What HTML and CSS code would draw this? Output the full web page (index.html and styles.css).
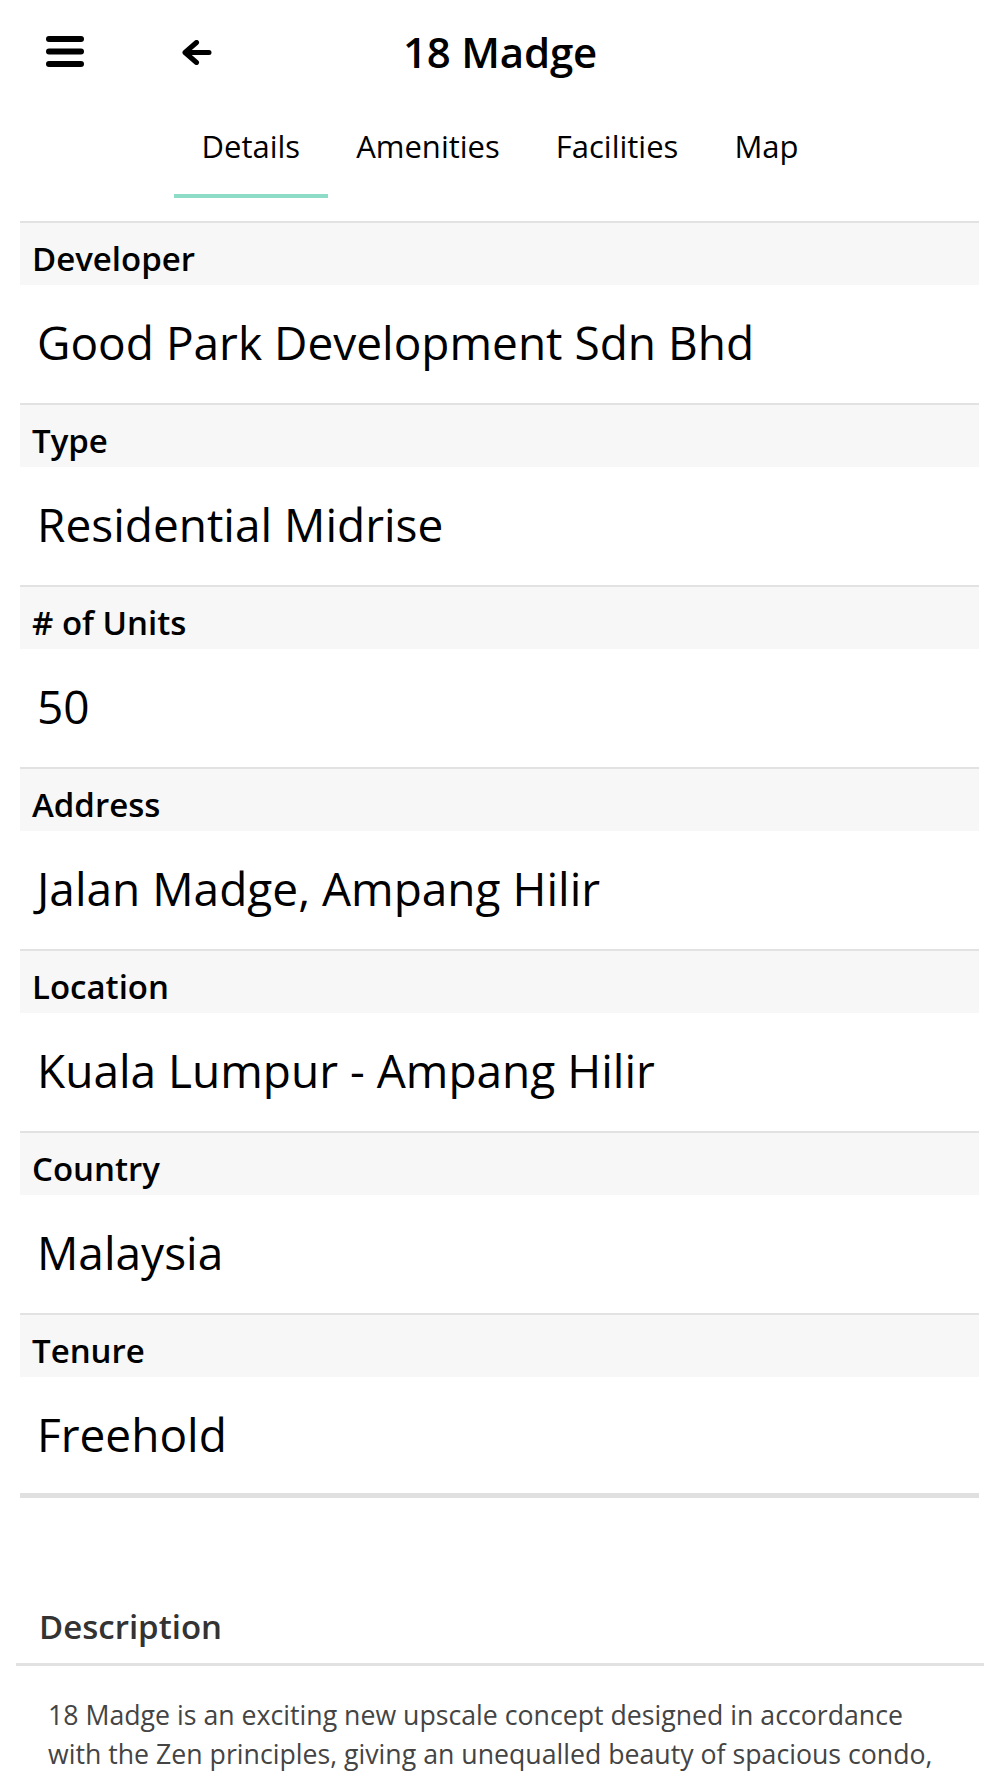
FILE: index.html
```html
<!DOCTYPE html>
<html lang="en">
<head>
<meta charset="utf-8">
<title>18 Madge</title>
<link rel="stylesheet" href="styles.css">
</head>
<body>
<header class="topbar">
  <div class="topbar-left">
    <button class="icon-btn menu-btn" aria-label="Menu">
      <svg width="38" height="32" viewBox="0 0 38 32">
        <rect x="0" y="0" width="38" height="6" rx="3"/>
        <rect x="0" y="12.5" width="38" height="6" rx="3"/>
        <rect x="0" y="25" width="38" height="6" rx="3"/>
      </svg>
    </button>
    <button class="icon-btn back-btn" aria-label="Back">
      <svg width="30" height="25" viewBox="0 0 30 25">
        <path d="M27 12.5H3M14.5 2.5L3 12.5L14.5 22.5" fill="none" stroke="#000" stroke-width="5" stroke-linecap="round" stroke-linejoin="round"/>
      </svg>
    </button>
  </div>
  <h1 class="title">18 Madge</h1>
  <div class="topbar-right"></div>
</header>

<nav class="tabs">
  <a class="tab active">Details</a>
  <a class="tab">Amenities</a>
  <a class="tab">Facilities</a>
  <a class="tab">Map</a>
</nav>

<section class="details">
  <div class="row"><div class="label">Developer</div><div class="value">Good Park Development Sdn Bhd</div></div>
  <div class="row"><div class="label">Type</div><div class="value">Residential Midrise</div></div>
  <div class="row"><div class="label"># of Units</div><div class="value">50</div></div>
  <div class="row"><div class="label">Address</div><div class="value">Jalan Madge, Ampang Hilir</div></div>
  <div class="row"><div class="label">Location</div><div class="value">Kuala Lumpur - Ampang Hilir</div></div>
  <div class="row"><div class="label">Country</div><div class="value">Malaysia</div></div>
  <div class="row last"><div class="label">Tenure</div><div class="value">Freehold</div></div>
</section>

<section class="description">
  <h2 class="desc-title">Description</h2>
  <p class="desc-text">18 Madge is an exciting new upscale concept designed in accordance with the Zen principles, giving an unequalled beauty of spacious condo,</p>
</section>
</body>
</html>
```

FILE: styles.css
```css
html, body {
  margin: 0;
  padding: 0;
  background: #ffffff;
}
body {
  width: 1000px;
  font-family: "Open Sans", "Noto Sans", "Liberation Sans", sans-serif;
  color: #000;
}

.topbar {
  display: grid;
  grid-template-columns: 1fr auto 1fr;
  align-items: center;
  height: 104px;
}
.topbar-left {
  display: flex;
  align-items: center;
  padding-left: 46px;
  gap: 99px;
}
.icon-btn {
  border: 0;
  background: none;
  padding: 0;
  margin: 0;
  display: flex;
  align-items: center;
}
.menu-btn svg { fill: #000; display: block; }
.back-btn svg { display: block; margin-left: -1px; }
.title {
  margin: 0;
  font-size: 42px;
  font-weight: 600;
  line-height: 42px;
  letter-spacing: -0.2px;
}

.tabs {
  display: flex;
  justify-content: center;
  margin-bottom: 23px;
}
.tab {
  display: block;
  font-size: 31px;
  line-height: 40px;
  padding: 22px 28px 28px;
  border-bottom: 4px solid transparent;
  color: #000;
}
.tab.active {
  border-bottom-color: #8ddcc8;
}

.details {
  margin: 0 21px 0 20px;
}
.row {
  border-top: 2px solid #e2e2e2;
}
.row.last {
  border-bottom: 5px solid #e0e0e0;
}
.label {
  background: #f7f7f7;
  height: 62px;
  box-sizing: border-box;
  padding: 10px 12px 0;
  font-size: 33px;
  line-height: 52px;
  font-weight: 600;
}
.value {
  height: 118px;
  padding-left: 17px;
  font-size: 46px;
  line-height: 114px;
}
.row.last .value { height: 116px; }

.description {
  margin: 107px 16px 0;
}
.desc-title {
  margin: 0;
  padding: 0 0 14px 23px;
  font-size: 33px;
  line-height: 44px;
  font-weight: 600;
  color: #333;
  border-bottom: 3px solid #e2e2e2;
}
.desc-text {
  margin: 29px 0 0;
  padding: 0 32px;
  font-size: 26.7px;
  line-height: 39px;
  color: #444;
}
```
